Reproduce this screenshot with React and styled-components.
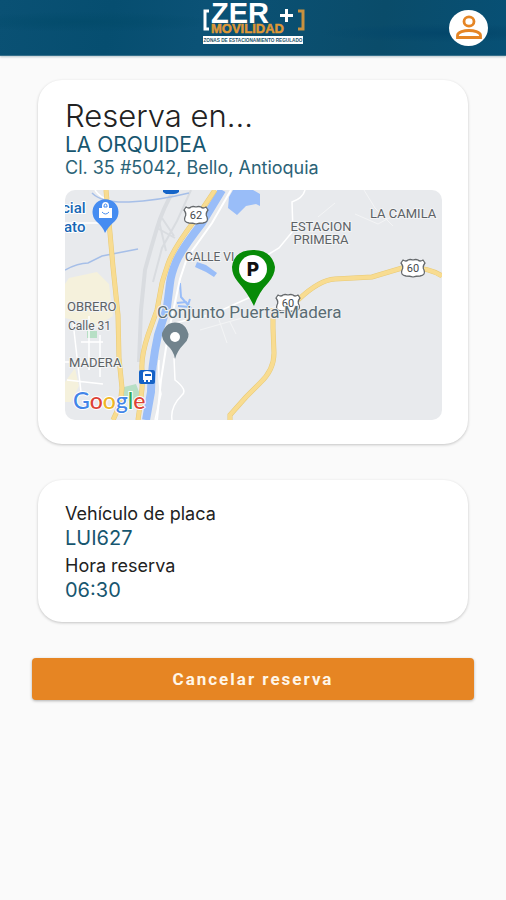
import React from "react";
import styled, { createGlobalStyle } from "styled-components";

const GlobalStyle = createGlobalStyle`
  * { box-sizing: border-box; }
  body { margin: 0; background: #fafafa; font-family: Inter, "Open Sans", sans-serif; }
  h1, h2, p, dl, dt, dd { margin: 0; font-weight: 400; }
`;

const Header = styled.header`
  display: grid;
  grid-template-columns: 1fr auto 1fr;
  height: 56px;
  padding: 0 18px;
  background:
    radial-gradient(ellipse at 17% 40%, #034b6b 0, transparent 22%),
    radial-gradient(ellipse at 88% 60%, #03466a 0, transparent 20%),
    linear-gradient(100deg, #0a5174 0%, #064e70 22%, #0b5276 40%, #0a4c6a 75%, #075075 100%);
  border-bottom: 1px solid #356f8a;
  box-shadow: 0 1px 2px #b9c6cc;
`;

const LogoLink = styled.a`
  grid-column: 2;
  display: block;
  height: 48px;
  svg { display: block; overflow: visible; }
`;

const ProfileButton = styled.button`
  justify-self: end;
  align-self: center;
  display: grid;
  place-items: center;
  width: 39px;
  height: 36px;
  padding: 0;
  border: 0;
  border-radius: 50%;
  background: #fff;
  color: #e58525;
`;

const Page = styled.main`
  display: flex;
  flex-direction: column;
  gap: 36px;
  padding: 24px 32px;
`;

const Card = styled.section`
  margin: 0 6px;
  padding: ${(p) => (p.$compact ? "22px 26px 20px 27px" : "20px 26px 24px 27px")};
  border-radius: 24px;
  background: #fff;
  box-shadow: 0 1px 3px #00000038;
`;

const Title = styled.h1`
  color: #222;
  font-size: 31px;
  font-weight: 300;
  line-height: 32px;
`;

const Place = styled.h2`
  color: #17566f;
  font-size: 21px;
  line-height: 26px;
`;

const Address = styled.p`
  color: #2b6377;
  font-size: 18px;
  line-height: 20px;
`;

const MapFrame = styled.figure`
  margin: 12px 0 0;
  overflow: hidden;
  border-radius: 10px;
  svg { display: block; width: 100%; height: auto; }
`;

const Details = styled.dl`
  display: grid;
  gap: 4px;
`;

const Label = styled.dt`
  color: #222;
  font-size: 18px;
  line-height: 24px;
`;

const Value = styled.dd`
  color: #17566f;
  font-size: 20px;
  line-height: 24px;
`;

const CancelButton = styled.button`
  height: 42px;
  border: 0;
  border-radius: 4px;
  background: #e68523;
  box-shadow: 0 1px 3px #0000004d;
  color: #fff6e8;
  font: 700 17px/24px Roboto, sans-serif;
  letter-spacing: 2px;
`;

function Logo() {
  return (
    <svg width="104" height="48" viewBox="0 0 104 48" role="img" aria-label="ZER + Movilidad">
      <g fontFamily="Liberation Sans, Arial, sans-serif" fontWeight="700">
        <text x="10" y="23" fontSize="29" fill="#fff">ZER</text>
        <text x="10" y="33" fontSize="13" fill="#df9836" stroke="#df9836" strokeWidth=".5">MOVILIDAD</text>
        <path d="M2 36h100v8H2z" fill="#fff" />
        <text x="52" y="42" fontSize="4.700" textAnchor="middle" fill="#24536a">ZONAS DE ESTACIONAMIENTO REGULADO</text>
      </g>
      <path d="M8 11H4v18h4" fill="none" stroke="#fff" strokeWidth="3" />
      <path d="M97 11h5v18h-5" fill="none" stroke="#c8913f" strokeWidth="3" />
      <path d="M79 15.500h13M85.500 9v13" stroke="#fff" strokeWidth="3" />
    </svg>
  );
}

function PersonIcon() {
  return (
    <svg width="28" height="27" viewBox="0 0 28 27" fill="none" stroke="currentColor" strokeWidth="2.800" aria-hidden="true">
      <ellipse cx="14" cy="7.500" rx="5" ry="4.700" />
      <path d="M2.500 23.500v-2c0-3.500 7-5 11.500-5s11.500 1.500 11.500 5v2z" />
    </svg>
  );
}

function RouteShield({ x, y, children }) {
  return (
    <g transform={`translate(${x} ${y})`}>
      <path
        d="M-10-8q3 2 5 0q2-1 5 0q3-1 5 0q2 2 5 0l2 3q-3 4-1 7q2 5-4 6q-4 0-7 1q-3-1-7-1q-6-1-4-6q2-3-1-7z"
        fill="#fff" stroke="#666a6d" strokeWidth="1.300" strokeLinejoin="round"
      />
      <text y="4" fontSize="11" fill="#44484b" stroke="none" textAnchor="middle">{children}</text>
    </g>
  );
}

function LocationMap() {
  return (
    <svg viewBox="0 0 377 230" role="img" aria-label="Mapa de LA ORQUIDEA" fontFamily="Roboto, sans-serif">
      <path d="M0 0h377v230H0z" fill="#e8eaed" />
      <path d="M4 88l28-6 12 12 4 32-16 10-32-8v-34zM0 192l10-14 4 18-8 16H0z" fill="#f5f1dc" />
      <path d="M22 141h10v7H22zM59 197l12-3 5 13-10 5-8-5z" fill="#b7dfc5" />
      <g fill="none" stroke="#d9dce0">
        <path d="M109 0Q98 18 92 38T80 80L76 120 74 172" strokeWidth="4" />
        <path d="M126 0L112 31 97 58 88 92M92 38l18 10M97 28l12 18M101 61l-7-30" strokeWidth="2" />
      </g>
      <g fill="none" stroke="#fff" strokeWidth="1.500">
        <path d="M0 33h35M8 132l8 70M0 172h32M35 145v42M30 0q5 8 15 10M16 152h22M2 190l36 4M24 126v54" />
        <path d="M240 0q-2 8-13 12l1 29-14 17-25 15M188 106l-40 18-38 9" />
        <path d="M94 170q-1 20 2 34l-6 26M109 168l1 22q13 10 7 15-12 12-10 25" />
        <path d="M135 140l42-12 37-13M152 124l10 29M165 132l6 12M299 0l11 18 18 18M290 24l23 10 22-12M270 13l-17 14" strokeWidth="1" stroke="#f3f4f5" />
      </g>
      <g fill="none" stroke="#a6bfe8" strokeWidth="1.500">
        <path d="M0 80q13-7 23-7l14-7 36-7M27 3q10 10 37 9t60-9" />
      </g>
      <path d="M168 0l-4 7-1 11 9 7 9-9 10-2 4 2V4l-7-4zM132 72l9 3 11 8-3 4-8-5-11-5z" fill="#99bdf8" />
      <path d="M115 93l1 14 7 8 2-6M112 113l9-1 4 5-12-1" fill="none" stroke="#99bdf8" strokeWidth="2" />
      <path d="M166 0L147 33 122 68 115 89 109 117 103 145 96 190 92 230" fill="none" stroke="#fff" strokeWidth="2" />
      <path d="M157 0L137 33Q116 60 111 72T105 93L102 117 93 145Q86 178 86 202L81 230" fill="none" stroke="#99bdf8" strokeWidth="8" />
      <g fill="none" stroke="#e8ca76" strokeWidth="5">
        <path d="M150 0L130 30Q108 59 103 74T97 93L92 120 83 145Q76 166 77 180T76 208L73 230" />
        <path d="M41 0L45 43 48 77 53 125 54 168 57 198Q56 215 48 230" />
        <path d="M377 86Q362 76 337 78L307 87 270 89Q254 90 233 110M208 118V138L209 163Q209 180 195 193L181 207 165 225V230" />
      </g>
      <g fill="none" stroke="#f8dc91" strokeWidth="4">
        <path d="M150 0L130 30Q108 59 103 74T97 93L92 120 83 145Q76 166 77 180T76 208L73 230" />
        <path d="M41 0L45 43 48 77 53 125 54 168 57 198Q56 215 48 230" />
        <path d="M377 86Q362 76 337 78L307 87 270 89Q254 90 233 110M208 118V138L209 163Q209 180 195 193L181 207 165 225V230" />
      </g>
      <path d="M98 0h16v2q-2 2-5 2h-8l-3-2z" fill="#1464c8" />
      <g fill="#5d6266" fontSize="12" stroke="#f3f4f5" strokeWidth="2" paintOrder="stroke">
        <text x="120" y="71">CALLE VI</text>
        <text x="305" y="28" fontSize="13">LA CAMILA</text>
        <text x="256" y="41" fontSize="13" textAnchor="middle">ESTACION</text>
        <text x="256" y="54" fontSize="13" textAnchor="middle">PRIMERA</text>
        <text x="2" y="121" fontSize="13">OBRERO</text>
        <text x="3" y="140">Calle 31</text>
        <text x="4" y="177" fontSize="13">MADERA</text>
      </g>
      <g fill="#1767b5" fontSize="15" fontWeight="500" stroke="#fff" strokeWidth="2" paintOrder="stroke">
        <text x="-3" y="23">cial</text>
        <text x="-1" y="42">ato</text>
      </g>
      <RouteShield x="131" y="25">62</RouteShield>
      <RouteShield x="348" y="78">60</RouteShield>
      <RouteShield x="223" y="113">60</RouteShield>
      <text x="92" y="128" fontSize="17" fill="#5a6c74" stroke="#eff1f2" strokeWidth="2" paintOrder="stroke">Conjunto Puerta-Madera</text>
      <path d="M40 43Q38 37 31 31A13 13 0 1 1 50 31Q43 37 40 43z" fill="#458cf1" />
      <path d="M34 18h13v10H34zM37 18v-2q0-4 3.500-4t3.500 4v2z" fill="#fff" />
      <path d="M39 17v-1q0-2 1.500-2t1.500 2v1zM37 22q3.500 4 7 0" fill="none" stroke="#458cf1" />
      <path d="M110 169Q109 161 101 154Q94 146 99 139A13 13 0 0 1 122 140Q126 147 119 154Q112 161 110 169z" fill="#71838d" />
      <circle cx="110" cy="147" r="5" fill="#fff" />
      <rect x="74" y="180" width="16" height="14" rx="2" fill="#1562c6" />
      <path d="M78 183q0-2 4-2t5 2v7h-2v2h-2v-2h-2v2h-2v-2h-1z" fill="#fff" />
      <path d="M80 184h6v2h-6z" fill="#1562c6" />
      <path d="M189 116Q182 102 173 92Q167 85 167 77Q169 60 188 60T210 77Q210 85 203 93Q194 102 189 116z" fill="#078b07" />
      <circle cx="188" cy="79" r="14" fill="#fff" />
      <text x="188" y="86" fontFamily="Inter, sans-serif" fontSize="19" fontWeight="800" fill="#111" textAnchor="middle">P</text>
      <text x="8" y="219" fontFamily="Lato, sans-serif" fontSize="23" fontWeight="500" stroke="#fff" strokeWidth="2" paintOrder="stroke">
        <tspan fill="#4285e8">G</tspan><tspan fill="#dc4236">o</tspan><tspan fill="#efb525">o</tspan><tspan fill="#4285e8">g</tspan><tspan fill="#37a852">l</tspan><tspan fill="#dc4236">e</tspan>
      </text>
    </svg>
  );
}

export default function App() {
  return (
    <>
      <GlobalStyle />
      <Header>
        <LogoLink href="#inicio"><Logo /></LogoLink>
        <ProfileButton type="button" aria-label="Perfil"><PersonIcon /></ProfileButton>
      </Header>
      <Page>
        <Card>
          <Title>Reserva en...</Title>
          <Place>LA ORQUIDEA</Place>
          <Address>Cl. 35 #5042, Bello, Antioquia</Address>
          <MapFrame><LocationMap /></MapFrame>
        </Card>
        <Card $compact>
          <Details>
            <div>
              <Label>Vehículo de placa</Label>
              <Value>LUI627</Value>
            </div>
            <div>
              <Label>Hora reserva</Label>
              <Value>06:30</Value>
            </div>
          </Details>
        </Card>
        <CancelButton type="button">Cancelar reserva</CancelButton>
      </Page>
    </>
  );
}
